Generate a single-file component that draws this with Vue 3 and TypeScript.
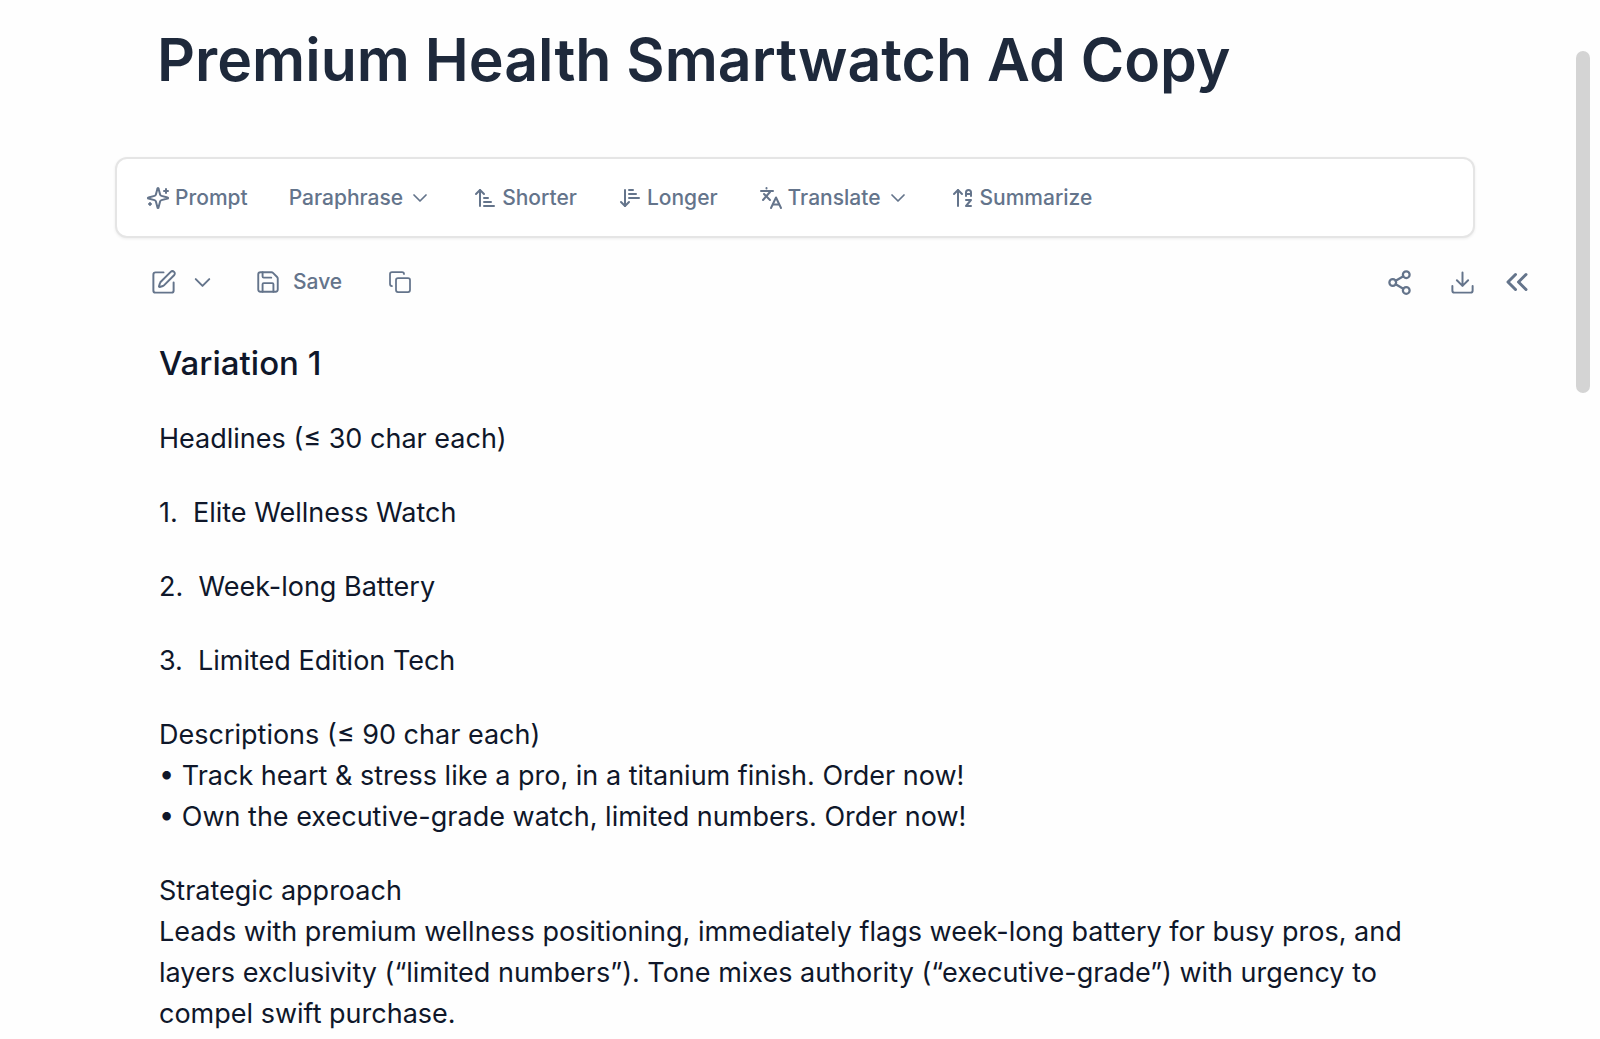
<script setup lang="ts">
interface Tool {
  label: string
  paths: string[]
  menu?: boolean
}

const chevron = 'm6 9 6 6 6-6'

const tools: Tool[] = [
  {
    label: 'Prompt',
    paths: [
      'M9.9 15.5A2 2 0 0 0 8.5 14.1l-6.1-1.6a.5.5 0 0 1 0-1L8.5 9.9A2 2 0 0 0 9.9 8.5l1.6-6.1a.5.5 0 0 1 1 0l1.6 6.1A2 2 0 0 0 15.5 9.9l6.1 1.6a.5.5 0 0 1 0 1l-6.1 1.6a2 2 0 0 0-1.4 1.4l-1.6 6.1a.5.5 0 0 1-1 0z',
      'M20 3v4',
      'M22 5h-4',
      'M4 17v2',
      'M5 18H3',
    ],
  },
  { label: 'Paraphrase', paths: [], menu: true },
  { label: 'Shorter', paths: ['m3 8 4-4 4 4', 'M7 4v16', 'M11 12h4', 'M11 16h7', 'M11 20h10'] },
  { label: 'Longer', paths: ['m3 16 4 4 4-4', 'M7 4v16', 'M11 4h4', 'M11 8h7', 'M11 12h10'] },
  {
    label: 'Translate',
    paths: ['M7.5 2v.5', 'M2 5h12', 'M4 14 11 6', 'M5 8l6 6', 'M12 22l5-10.5L22 22', 'M14 18.5h6'],
    menu: true,
  },
  {
    label: 'Summarize',
    paths: ['m3 8 4-4 4 4', 'M7 4v16', 'M20 8h-5', 'M15 10V6.5a2.5 2.5 0 0 1 5 0V10', 'M15 14h5l-5 6h5'],
  },
]

const headlines = ['Elite Wellness Watch', 'Week-long Battery', 'Limited Edition Tech']
</script>

<template>
  <main class="page">
    <h1 class="title">Premium Health Smartwatch Ad Copy</h1>

    <div class="toolbar" role="toolbar" aria-label="Rewrite tools">
      <button v-for="tool in tools" :key="tool.label" type="button" class="tool">
        <svg v-if="tool.paths.length" class="icon bold" viewBox="0 0 24 24" aria-hidden="true">
          <path v-for="d in tool.paths" :key="d" :d="d" />
        </svg>
        <span>{{ tool.label }}</span>
        <svg v-if="tool.menu" class="icon" viewBox="0 0 24 24" aria-hidden="true">
          <path :d="chevron" />
        </svg>
      </button>
    </div>

    <div class="actions">
      <button type="button" class="action edit" aria-label="Edit mode">
        <svg class="icon large" viewBox="0 0 24 24" aria-hidden="true">
          <path d="M12 3H5a2 2 0 0 0-2 2v14a2 2 0 0 0 2 2h14a2 2 0 0 0 2-2v-7" />
          <path d="M18.4 2.6a2.1 2.1 0 0 1 3 3l-9 9a2 2 0 0 1-.9.5l-2.9.9a.5.5 0 0 1-.6-.6l.9-2.9a2 2 0 0 1 .5-.9z" />
        </svg>
        <svg class="icon large" viewBox="0 0 24 24" aria-hidden="true"><path :d="chevron" /></svg>
      </button>
      <button type="button" class="action save">
        <svg class="icon medium" viewBox="0 0 24 24" aria-hidden="true">
          <path d="M15.2 3a2 2 0 0 1 1.4.6l3.8 3.8a2 2 0 0 1 .6 1.4V19a2 2 0 0 1-2 2H5a2 2 0 0 1-2-2V5a2 2 0 0 1 2-2z" />
          <path d="M17 21v-7a1 1 0 0 0-1-1H8a1 1 0 0 0-1 1v7" />
          <path d="M7 3v4a1 1 0 0 0 1 1h7" />
        </svg>
        <span>Save</span>
      </button>
      <button type="button" class="action" aria-label="Copy">
        <svg class="icon" viewBox="0 0 24 24" aria-hidden="true">
          <rect x="8" y="8" width="14" height="14" rx="2" />
          <path d="M4 16a2 2 0 0 1-2-2V4a2 2 0 0 1 2-2h10a2 2 0 0 1 2 2" />
        </svg>
      </button>
      <div class="right">
        <button type="button" class="action" aria-label="Share">
          <svg class="icon large bold" viewBox="0 0 24 24" aria-hidden="true">
            <circle cx="18" cy="5" r="3" />
            <circle cx="6" cy="12" r="3" />
            <circle cx="18" cy="19" r="3" />
            <path d="m8.6 13.5 6.8 4M15.4 6.5l-6.8 4" />
          </svg>
        </button>
        <button type="button" class="action download" aria-label="Download">
          <svg class="icon large" viewBox="0 0 24 24" aria-hidden="true">
            <path d="M21 15v4a2 2 0 0 1-2 2H5a2 2 0 0 1-2-2v-4" />
            <path d="m7 10 5 5 5-5M12 15V3" />
          </svg>
        </button>
        <button type="button" class="action" aria-label="Collapse panel">
          <svg class="icon huge bold" viewBox="0 0 24 24" aria-hidden="true">
            <path d="m11 17-5-5 5-5M18 17l-5-5 5-5" />
          </svg>
        </button>
      </div>
    </div>

    <article class="document">
      <h2>Variation 1</h2>
      <p>Headlines (≤ 30 char each)</p>
      <p v-for="(headline, i) in headlines" :key="headline">{{ i + 1 }}.&nbsp; {{ headline }}</p>
      <p>
        Descriptions (≤ 90 char each)<br />
        • Track heart &amp; stress like a pro, in a titanium finish. Order now!<br />
        • Own the executive-grade watch, limited numbers. Order now!
      </p>
      <p>
        Strategic approach<br />
        Leads with premium wellness positioning, immediately flags week-long battery for busy pros, and
        layers exclusivity (“limited numbers”). Tone mixes authority (“executive-grade”) with urgency to
        compel swift purchase.
      </p>
    </article>

    <div class="scroll-thumb" aria-hidden="true"></div>
  </main>
</template>

<style>
body {
  margin: 0;
  background: #fefefe;
}
</style>

<style scoped>
.page {
  position: relative;
  box-sizing: border-box;
  height: 100vh;
  overflow: hidden;
  padding: 24px 65px 0 115px;
  font-family: Inter, 'Liberation Sans', sans-serif;
  color: #0f172a;
}

.title {
  margin: 0 0 61px 42px;
  font-size: 59px;
  line-height: 72px;
  font-weight: 600;
  color: #1e293b;
}

.toolbar {
  display: flex;
  align-items: center;
  gap: 1px;
  box-sizing: border-box;
  height: 81px;
  margin-right: 60px;
  padding: 0 9px;
  border: 2px solid #e5e5e5;
  border-radius: 12px;
  background: #fff;
  box-shadow: 0 1px 3px rgba(0, 0, 0, 0.07);
}

button {
  display: flex;
  align-items: center;
  margin: 0;
  padding: 0;
  border: 0;
  background: none;
  font: inherit;
  font-size: 21px;
  line-height: 28px;
  font-weight: 500;
  color: #64748b;
  cursor: pointer;
}

.tool {
  gap: 5px;
  padding: 0 20px;
}

.icon {
  flex: none;
  width: 24px;
  height: 24px;
  fill: none;
  stroke: currentColor;
  stroke-width: 1.75;
  stroke-linecap: round;
  stroke-linejoin: round;
}

.medium {
  width: 26px;
  height: 26px;
}

.large {
  width: 27px;
  height: 27px;
}

.huge {
  width: 36px;
  height: 36px;
}

.bold {
  stroke-width: 2;
}

.actions {
  display: flex;
  align-items: center;
  height: 36px;
  margin: 26px 0 43px;
  padding-left: 35px;
}

.edit,
.save {
  gap: 12px;
}

.save {
  margin: 0 46px 0 39px;
}

.right {
  display: flex;
  align-items: center;
  margin-left: auto;
}

.download {
  margin: 0 23px 0 36px;
}

.document {
  margin: 0 60px 0 44px;
  font-size: 27px;
  line-height: 41px;
}

.document h2 {
  margin: 0 0 34px;
  font-size: 33px;
  line-height: 41px;
  font-weight: 500;
}

.document p {
  margin: 0 0 33px;
}

.scroll-thumb {
  position: absolute;
  top: 51px;
  right: 10px;
  width: 14px;
  height: 342px;
  border-radius: 7px;
  background: #d4d4d4;
}
</style>
